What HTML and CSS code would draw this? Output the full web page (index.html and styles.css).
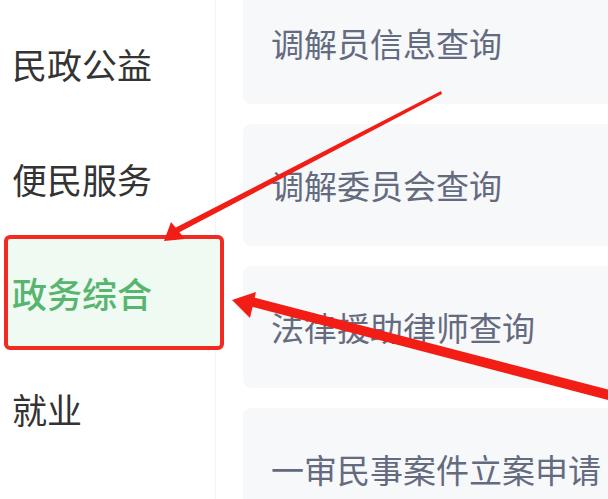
FILE: index.html
```html
<!DOCTYPE html>
<html lang="zh-CN">
<head>
  <meta charset="UTF-8">
  <meta name="viewport" content="width=device-width, initial-scale=1.0">
  <title>政务综合</title>
  <link rel="stylesheet" href="styles.css">
</head>
<body>
  <div class="screen">
    <!-- Category sidebar -->
    <ul class="side-menu">
      <li class="side-item">民政公益</li>
      <li class="side-item">便民服务</li>
      <li class="side-item active">政务综合</li>
      <li class="side-item">就业</li>
    </ul>

    <!-- Service cards -->
    <div class="service-panel">
      <div class="service-list">
        <div class="service-card">调解员信息查询</div>
        <div class="service-card">调解委员会查询</div>
        <div class="service-card">法律援助律师查询</div>
        <div class="service-card">一审民事案件立案申请</div>
      </div>
    </div>

    <!-- Annotation arrows -->
    <svg class="marks" width="608" height="499" viewBox="0 0 608 499">
      <polygon fill="#f21d14" points="441,91 442,94 176,234 173,229" />
      <polygon fill="#f21d14" points="164,241 171,222 185,239" />
      <polygon fill="#f21d14" points="252,297 610,390 608,400 249,306" />
      <polygon fill="#f21d14" points="232,300 256,292 250,318" />
    </svg>
  </div>
</body>
</html>
```

FILE: styles.css
```css
html,
body {
  margin: 0;
  padding: 0;
  background: #fff;
  overflow: hidden;
}

.screen {
  width: 608px;
  height: 499px;
  display: flex;
  position: relative;
  overflow: hidden;
  font-family: "Noto Sans CJK SC", "Noto Sans", sans-serif;
}

/* Sidebar */
.side-menu {
  list-style: none;
  margin: 0;
  padding: 6px 0 0;
  width: 215px;
  flex-shrink: 0;
  border-right: 1px solid #f4f4f6;
}

.side-item {
  height: 115px;
  display: flex;
  align-items: center;
  padding-left: 12px;
  font-size: 35px;
  color: #333;
  box-sizing: border-box;
}

.side-item.active {
  color: #58b56f;
  font-weight: 500;
  background: #effaf3;
  margin: -1px -9px 1px 4px;
  padding-left: 4px;
  border: 4px solid #f32a21;
  border-radius: 6px;
}

/* Right panel */
.service-panel {
  flex: 1;
  padding-left: 27px;
  overflow: hidden;
}

.service-list {
  margin-top: -18px;
  display: flex;
  flex-direction: column;
  gap: 20px;
  width: 420px;
}

.service-card {
  height: 122px;
  display: flex;
  align-items: center;
  padding-left: 28px;
  background: #f7f8fa;
  border-radius: 8px;
  font-size: 33px;
  color: #646b7f;
  white-space: nowrap;
}

/* Overlay */
.marks {
  position: absolute;
  left: 0;
  top: 0;
  pointer-events: none;
}
```
